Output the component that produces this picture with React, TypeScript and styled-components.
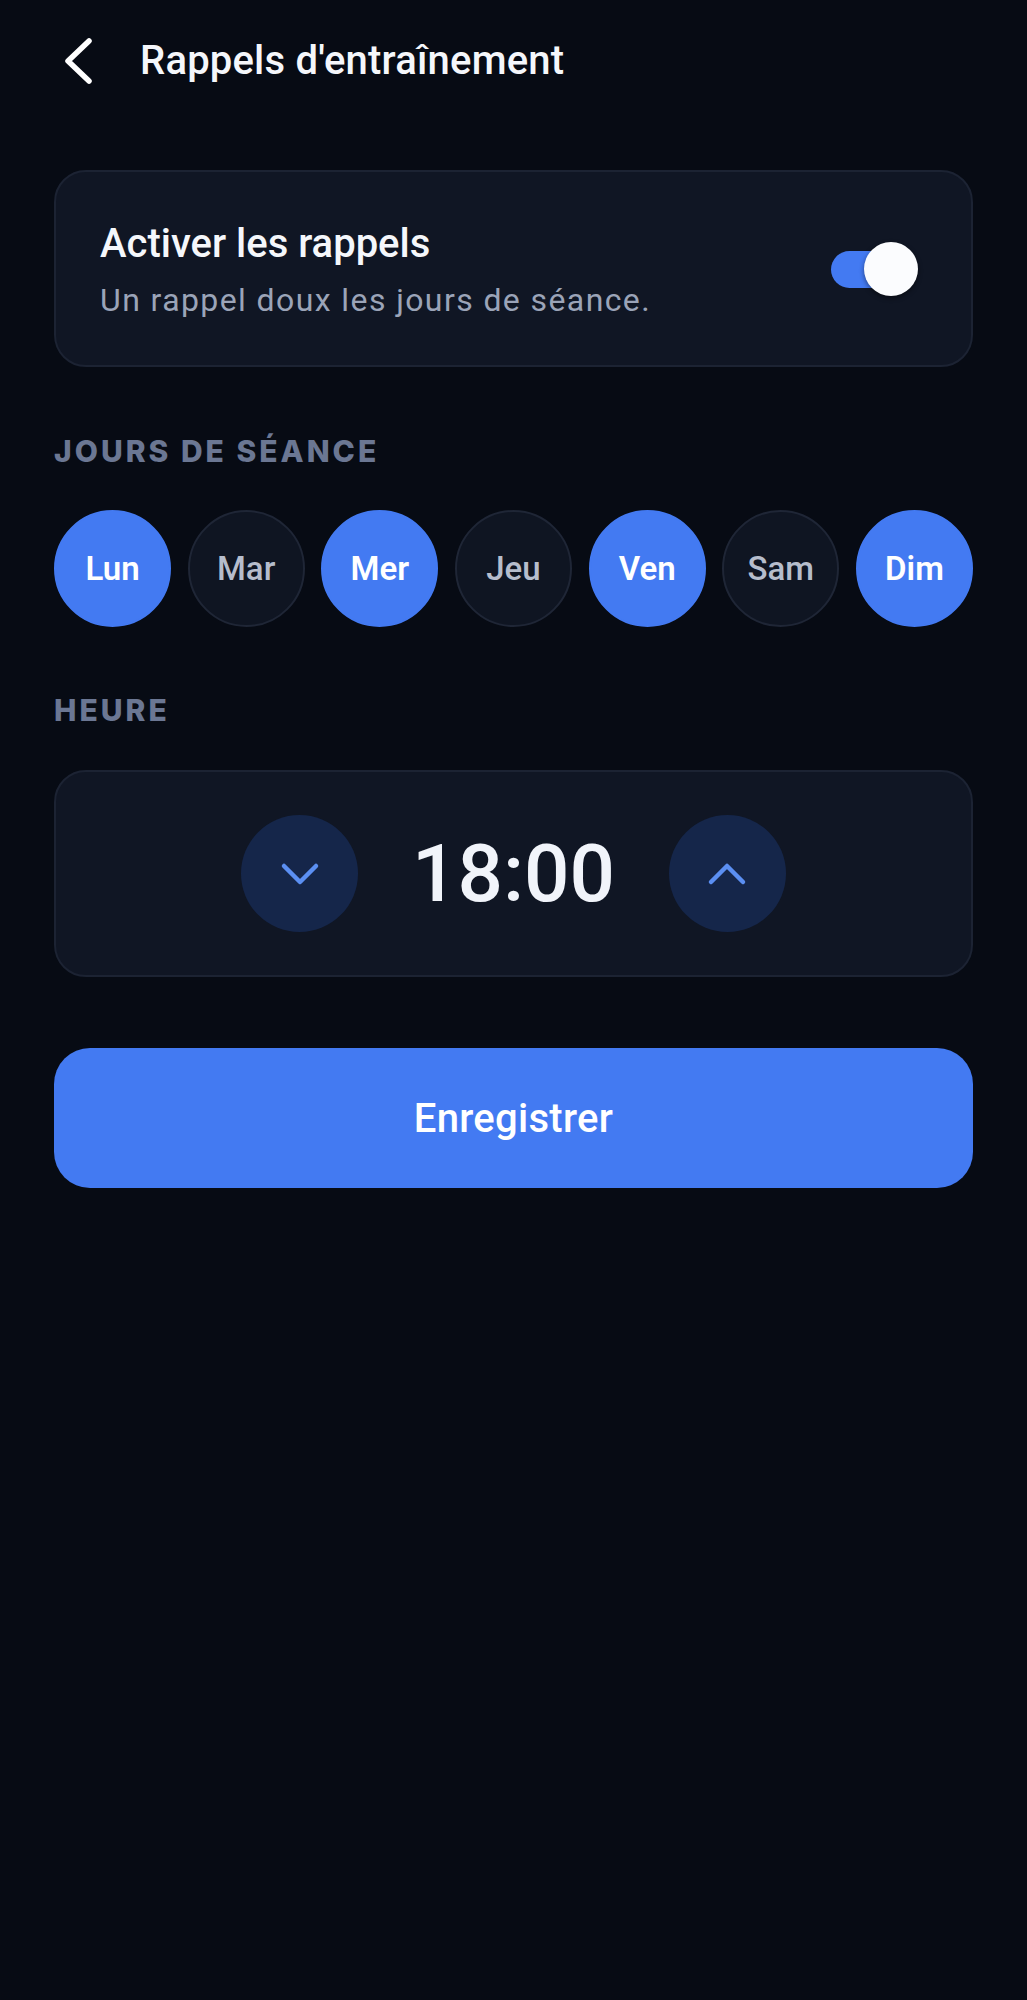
import React, { useState } from 'react';
import styled, { createGlobalStyle } from 'styled-components';

const GlobalStyle = createGlobalStyle`
    html, body {
        margin: 0;
        padding: 0;
        background: #070b14;
    }
    body {
        font-family: Roboto, "Noto Sans", "Liberation Sans", sans-serif;
        color: #f3f5fa;
    }
    * {
        box-sizing: border-box;
    }
`;

const Screen = styled.div`
    min-height: 2000px;
    background: #070b14;
    padding: 0 54px;
    display: flex;
    flex-direction: column;
`;

const Header = styled.header`
    height: 116px;
    display: flex;
    align-items: center;
    gap: 47px;
    padding: 5px 0 0 9px;
`;

const BackButton = styled.button`
    background: none;
    border: 0;
    padding: 0;
    display: flex;
    cursor: pointer;
`;

const Title = styled.h1`
    margin: 0;
    font-size: 40px;
    line-height: 48px;
    font-weight: 500;
    letter-spacing: 0.2px;
    color: #f5f7fb;
`;

const Card = styled.section<{ $height: number }>`
    height: ${(p) => p.$height}px;
    background: #101624;
    border: 2px solid #1c2333;
    border-radius: 32px;
    display: flex;
    align-items: center;
`;

const ToggleCard = styled(Card)`
    margin-top: 54px;
    padding: 0 53px 0 44px;
    justify-content: space-between;
`;

const TextBlock = styled.div`
    display: flex;
    flex-direction: column;
    gap: 12px;
    padding-top: 3px;
`;

const CardTitle = styled.div`
    font-size: 40px;
    line-height: 48px;
    font-weight: 500;
    color: #f5f7fb;
`;

const CardSubtitle = styled.div`
    font-size: 32px;
    line-height: 40px;
    font-weight: 400;
    letter-spacing: 1.4px;
    color: #9ba4b8;
`;

const Switch = styled.button`
    position: relative;
    width: 87px;
    height: 54px;
    border: 0;
    padding: 0;
    background: none;
    cursor: pointer;
    flex-shrink: 0;
`;

const SwitchTrack = styled.span<{ $on: boolean }>`
    position: absolute;
    left: 0;
    top: 9px;
    width: 72px;
    height: 37px;
    border-radius: 19px;
    background: ${(p) => (p.$on ? '#437af2' : '#374151')};
`;

const SwitchKnob = styled.span<{ $on: boolean }>`
    position: absolute;
    top: 0;
    ${(p) => (p.$on ? 'right: 0;' : 'left: 0;')}
    width: 54px;
    height: 54px;
    border-radius: 50%;
    background: #fbfcfe;
    box-shadow: 0 2px 5px rgba(0, 0, 0, 0.45);
`;

const SectionLabel = styled.h2<{ $top: number }>`
    margin: ${(p) => p.$top}px 0 0;
    font-family: Inter, "Noto Sans", sans-serif;
    font-size: 30px;
    line-height: 36px;
    font-weight: 800;
    letter-spacing: 3px;
    color: #6b7793;
`;

const DayRow = styled.div`
    margin-top: 41px;
    display: flex;
    justify-content: space-between;
`;

const DayChip = styled.button<{ $active: boolean }>`
    width: 117px;
    height: 117px;
    border-radius: 50%;
    padding: 0;
    display: flex;
    align-items: center;
    justify-content: center;
    font-family: Roboto, "Noto Sans", sans-serif;
    font-size: 33px;
    font-weight: ${(p) => (p.$active ? 600 : 500)};
    color: ${(p) => (p.$active ? '#ffffff' : '#b6bdcc')};
    background: ${(p) => (p.$active ? '#437af2' : '#0f1522')};
    border: 2px solid ${(p) => (p.$active ? '#437af2' : '#1f2636')};
    cursor: pointer;
`;

const TimeCard = styled(Card)`
    margin-top: 42px;
    justify-content: center;
    gap: 54px;
`;

const StepButton = styled.button`
    width: 117px;
    height: 117px;
    border-radius: 50%;
    border: 0;
    padding: 0;
    background: #15264a;
    display: flex;
    align-items: center;
    justify-content: center;
    cursor: pointer;
`;

const TimeValue = styled.div`
    font-size: 80px;
    line-height: 96px;
    font-weight: 500;
    color: #f1f4fa;
    min-width: 198px;
    text-align: center;
`;

const SaveButton = styled.button`
    margin-top: 71px;
    height: 140px;
    border: 0;
    border-radius: 36px;
    background: #437af2;
    color: #ffffff;
    font-family: Roboto, "Noto Sans", sans-serif;
    font-size: 40px;
    font-weight: 500;
    letter-spacing: 0.3px;
    cursor: pointer;
`;

const days = [
    { label: 'Lun', on: true },
    { label: 'Mar', on: false },
    { label: 'Mer', on: true },
    { label: 'Jeu', on: false },
    { label: 'Ven', on: true },
    { label: 'Sam', on: false },
    { label: 'Dim', on: true },
];

function Chevron({ up }: { up?: boolean }) {
    return (
        <svg width="40" height="26" viewBox="0 0 40 26" fill="none">
            <path
                d={up ? 'M4 21 L20 5 L36 21' : 'M4 5 L20 21 L36 5'}
                stroke="#5b8ff2"
                strokeWidth="4.5"
                strokeLinecap="round"
                strokeLinejoin="round"
            />
        </svg>
    );
}

export default function App() {
    const [enabled, setEnabled] = useState(true);
    const [selected, setSelected] = useState(days.map((d) => d.on));
    const [minutes, setMinutes] = useState(18 * 60);

    const hh = String(Math.floor(minutes / 60)).padStart(2, '0');
    const mm = String(minutes % 60).padStart(2, '0');

    const step = (delta: number) => setMinutes((m) => (m + delta + 1440) % 1440);

    return (
        <>
            <GlobalStyle />
            <Screen>
                <Header>
                    <BackButton aria-label="Retour">
                        <svg width="30" height="48" viewBox="0 0 30 48" fill="none">
                            <path
                                d="M26 4 L5 24 L26 44"
                                stroke="#ffffff"
                                strokeWidth="5.5"
                                strokeLinecap="round"
                                strokeLinejoin="round"
                            />
                        </svg>
                    </BackButton>
                    <Title>Rappels d'entraînement</Title>
                </Header>

                <ToggleCard $height={197}>
                    <TextBlock>
                        <CardTitle>Activer les rappels</CardTitle>
                        <CardSubtitle>Un rappel doux les jours de séance.</CardSubtitle>
                    </TextBlock>
                    <Switch onClick={() => setEnabled(!enabled)} aria-label="Activer">
                        <SwitchTrack $on={enabled} />
                        <SwitchKnob $on={enabled} />
                    </Switch>
                </ToggleCard>

                <SectionLabel $top={66}>JOURS DE SÉANCE</SectionLabel>
                <DayRow>
                    {days.map((d, i) => (
                        <DayChip
                            key={d.label}
                            $active={selected[i]}
                            onClick={() => setSelected(selected.map((v, j) => (j === i ? !v : v)))}
                        >
                            {d.label}
                        </DayChip>
                    ))}
                </DayRow>

                <SectionLabel $top={65}>HEURE</SectionLabel>
                <TimeCard $height={207}>
                    <StepButton aria-label="Moins" onClick={() => step(-15)}>
                        <Chevron />
                    </StepButton>
                    <TimeValue>
                        {hh}:{mm}
                    </TimeValue>
                    <StepButton aria-label="Plus" onClick={() => step(15)}>
                        <Chevron up />
                    </StepButton>
                </TimeCard>

                <SaveButton>Enregistrer</SaveButton>
            </Screen>
        </>
    );
}
